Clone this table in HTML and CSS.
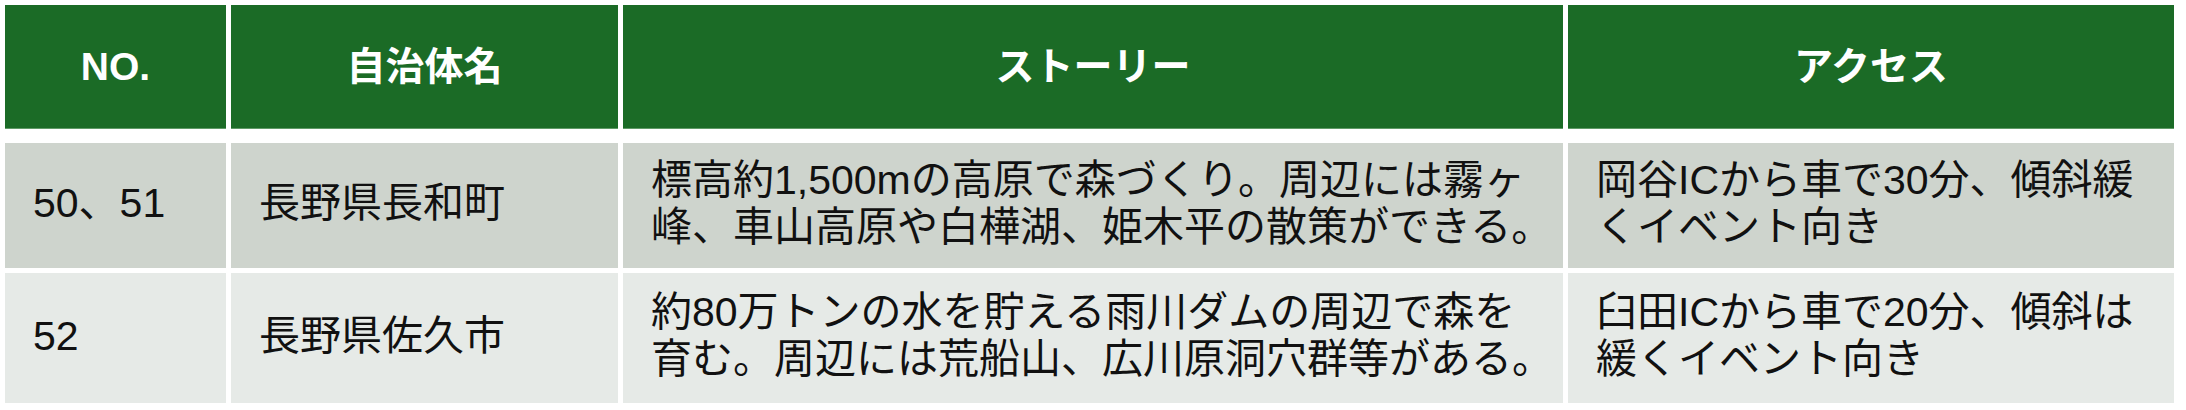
FILE: index.html
```html
<!DOCTYPE html>
<html lang="ja">
<head>
<meta charset="utf-8">
<title>長野県 森づくり候補地</title>
<link rel="stylesheet" href="styles.css">
</head>
<body>
<div class="table">
  <div class="cell head">NO.</div>
  <div class="cell head">自治体名</div>
  <div class="cell head">ストーリー</div>
  <div class="cell head">アクセス</div>

  <div class="cell odd">50、51</div>
  <div class="cell odd">長野県長和町</div>
  <div class="cell odd story">標高約1,500mの高原で森づくり。周辺には霧ヶ峰、車山高原や白樺湖、姫木平の散策ができる。</div>
  <div class="cell odd">岡谷ICから車で30分、傾斜緩くイベント向き</div>

  <div class="cell even">52</div>
  <div class="cell even">長野県佐久市</div>
  <div class="cell even story">約80万トンの水を貯える雨川ダムの周辺で森を育む。周辺には荒船山、広川原洞穴群等がある。</div>
  <div class="cell even">臼田ICから車で20分、傾斜は緩くイベント向き</div>
</div>
</body>
</html>
```

FILE: styles.css
```css
html, body {
  margin: 0;
  padding: 0;
  background: #ffffff;
}

.table {
  display: grid;
  grid-template-columns: 221px 387px 940px 606px;
  grid-template-rows: 133px 125px 130px;
  column-gap: 5px;
  row-gap: 5px;
  padding: 5px 0 0 5px;
  font-family: "Liberation Sans", "Noto Sans CJK JP", sans-serif;
}

.cell {
  display: flex;
  align-items: center;
  box-sizing: border-box;
  padding: 0 30px 4px 28px;
  font-size: 41px;
  line-height: 47px;
  color: #111111;
  font-weight: 400;
}

.head {
  height: 124px;
  align-self: start;
  justify-content: center;
  padding: 0;
  background: #1b6b26;
  color: #ffffff;
  font-size: 39px;
  font-weight: 700;
  border-bottom: 1px solid #5f9a66;
}

.odd {
  background: #ced4cd;
}

.even {
  background: #e6eae7;
}

.story {
  padding-right: 8px;
}
```
